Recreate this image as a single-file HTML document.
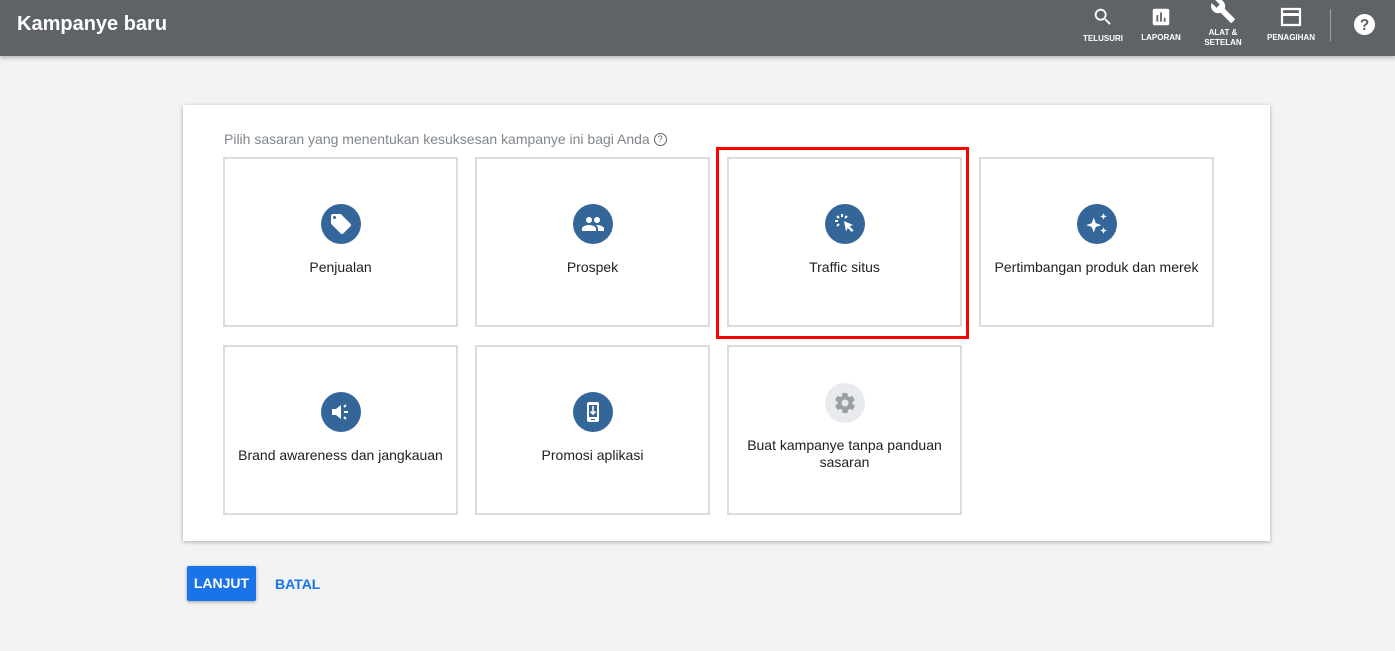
<!DOCTYPE html>
<html><head><meta charset="utf-8"><style>
*{margin:0;padding:0;box-sizing:border-box}
body{width:1395px;height:651px;background:#f1f3f4;font-family:"Liberation Sans",Arial,sans-serif;position:relative;overflow:hidden}
.hdr{position:absolute;left:0;top:0;width:1395px;height:56px;background:#5f6368;box-shadow:0 2px 4px rgba(0,0,0,.25)}
.title{position:absolute;left:17px;top:13px;color:#fff;font-size:20px;font-weight:bold}
.nav{position:absolute;color:#fff;font-size:8px;font-weight:bold;text-align:center;line-height:10px}
.panel{position:absolute;left:183px;top:105px;width:1087px;height:436px;background:#fff;box-shadow:0 1px 4px rgba(0,0,0,.3)}
.q{position:absolute;left:224px;top:131px;font-size:14px;color:#80868b}
.card{position:absolute;width:235px;height:170px;border:2px solid #dadce0;background:#fff}
.ic{position:absolute;left:50%;margin-left:-20px;width:40px;height:40px;border-radius:50%;background:#346699;display:flex;align-items:center;justify-content:center}
.lbl{position:absolute;left:0;right:0;text-align:center;font-size:14px;color:#202124;line-height:17px}
.red{position:absolute;left:716px;top:147px;width:253px;height:192px;border:3px solid #f00}
.btn{position:absolute;left:187px;top:566px;width:69px;height:35px;background:#1a73e8;border-radius:2px;color:#fff;font-weight:bold;font-size:14px;text-align:center;line-height:35px;box-shadow:0 1px 3px rgba(0,0,0,.35)}
.batal{position:absolute;left:275px;top:576px;color:#1a73e8;font-weight:bold;font-size:14px}
</style></head><body>
<div class="hdr">
<div class="title">Kampanye baru</div>
<svg style="position:absolute;left:1092px;top:6px" width="22" height="22" viewBox="0 0 24 24"><path fill="#fff" d="M15.5 14h-.8l-.3-.3A6.5 6.5 0 1 0 9.5 16a6.5 6.5 0 0 0 4.2-1.6l.3.3v.8l5 5 1.5-1.5-5-5zm-6 0a4.5 4.5 0 1 1 0-9 4.5 4.5 0 0 1 0 9z"/></svg>
<div class="nav" style="left:1080px;top:34px;width:46px">TELUSURI</div>
<svg style="position:absolute;left:1150px;top:6px" width="22" height="22" viewBox="0 0 24 24"><path fill="#fff" d="M19 3H5a2 2 0 0 0-2 2v14a2 2 0 0 0 2 2h14a2 2 0 0 0 2-2V5a2 2 0 0 0-2-2zM9 17H7v-7h2v7zm4 0h-2V7h2v10zm4 0h-2v-4h2v4z"/></svg>
<div class="nav" style="left:1138px;top:33px;width:46px">LAPORAN</div>
<svg style="position:absolute;left:1210px;top:-2px" width="26" height="26" viewBox="0 0 24 24"><path fill="#fff" d="M22.7 19l-9.1-9.1c.9-2.3.4-5-1.5-6.9-2-2-5-2.4-7.4-1.3L9 6 6 9 1.6 4.7C.4 7.1.9 10.1 2.9 12.1c1.9 1.9 4.6 2.4 6.9 1.5l9.1 9.1c.4.4 1 .4 1.4 0l2.3-2.3c.5-.4.5-1.1.1-1.4z"/></svg>
<div class="nav" style="left:1200px;top:28px;width:46px">ALAT &amp;<br>SETELAN</div>
<svg style="position:absolute;left:1279px;top:6px" width="24" height="22" viewBox="0 0 24 22"><path fill="none" stroke="#fff" stroke-width="2.2" d="M3 3h18v16H3z"/><path fill="#fff" d="M3 7h18v3H3z"/></svg>
<div class="nav" style="left:1264px;top:33px;width:54px">PENAGIHAN</div>
<div style="position:absolute;left:1330px;top:9px;width:1px;height:32px;background:#9aa0a6"></div>
<svg style="position:absolute;left:1353px;top:13px" width="23" height="23" viewBox="0 0 24 24"><circle cx="12" cy="12" r="11" fill="#fff"/><text x="12" y="17.5" text-anchor="middle" font-family="Liberation Sans" font-weight="bold" font-size="16" fill="#5f6368">?</text></svg>
</div>
<div class="panel"></div>
<div class="q">Pilih sasaran yang menentukan kesuksesan kampanye ini bagi Anda <span style="display:inline-block;width:13px;height:13px;border:1.3px solid #5f6368;border-radius:50%;font-size:9px;text-align:center;line-height:11px;color:#5f6368;vertical-align:2px">?</span></div>

<div class="card" style="left:223px;top:157px"><div class="ic" style="top:45px"><svg width="24" height="24" viewBox="0 0 24 24"><path fill="#fff" d="M21.4 11.6l-9-9C12.1 2.2 11.6 2 11 2H4c-1.1 0-2 .9-2 2v7c0 .6.2 1.1.6 1.4l9 9c.4.4.9.6 1.4.6s1.1-.2 1.4-.6l7-7c.4-.4.6-.9.6-1.4s-.2-1.1-.6-1.4zM5.5 7A1.5 1.5 0 1 1 5.5 4a1.5 1.5 0 0 1 0 3z"/></svg></div><div class="lbl" style="top:100px">Penjualan</div></div>
<div class="card" style="left:475px;top:157px"><div class="ic" style="top:45px"><svg width="24" height="24" viewBox="0 0 24 24"><path fill="#fff" d="M16 11c1.7 0 3-1.3 3-3s-1.3-3-3-3-3 1.3-3 3 1.3 3 3 3zm-8 0c1.7 0 3-1.3 3-3S9.7 5 8 5 5 6.3 5 8s1.3 3 3 3zm0 2c-2.3 0-7 1.2-7 3.5V19h14v-2.5C15 14.2 10.3 13 8 13zm8 0c-.3 0-.6 0-1 .1 1.2.8 2 2 2 3.4V19h6v-2.5c0-2.3-4.7-3.5-7-3.5z"/></svg></div><div class="lbl" style="top:100px">Prospek</div></div>
<div class="card" style="left:727px;top:157px"><div class="ic" style="top:45px"><svg width="24" height="24" viewBox="0 0 24 24"><path fill="#fff" d="M11 9l9 4-3.5 1.3 4 4-1.7 1.7-4-4L13 19.5z"/><path stroke="#fff" stroke-width="2" d="M9 2v3M4 4l2 2M2 9h3M4 14l2-2M14 4l-2 2"/></svg></div><div class="lbl" style="top:100px">Traffic situs</div></div>
<div class="card" style="left:979px;top:157px"><div class="ic" style="top:45px"><svg width="26" height="26" viewBox="0 0 24 24"><path fill="#fff" d="M9 6l1.8 5.2L16 13l-5.2 1.8L9 20l-1.8-5.2L2 13l5.2-1.8zM18 2l.9 2.1L21 5l-2.1.9L18 8l-.9-2.1L15 5l2.1-.9zM18 15l.9 2.1 2.1.9-2.1.9L18 21l-.9-2.1L15 18l2.1-.9z"/></svg></div><div class="lbl" style="top:100px">Pertimbangan produk dan merek</div></div>

<div class="card" style="left:223px;top:345px"><div class="ic" style="top:45px"><svg width="24" height="24" viewBox="0 0 24 24"><path fill="#fff" d="M3 9h4l5-4v14l-5-4H3z"/><path stroke="#fff" stroke-width="2" d="M15 12h4M15 7l2-2M15 17l2 2"/></svg></div><div class="lbl" style="top:100px">Brand awareness dan jangkauan</div></div>
<div class="card" style="left:475px;top:345px"><div class="ic" style="top:45px"><svg width="24" height="24" viewBox="0 0 24 24"><rect x="6" y="2" width="12" height="20" rx="2" fill="#fff"/><rect x="8" y="5" width="8" height="12" fill="#346699"/><path stroke="#fff" stroke-width="1.6" d="M12 6v8M9.5 11.5L12 14l2.5-2.5" fill="none"/><rect x="10" y="19" width="4" height="1" fill="#346699"/></svg></div><div class="lbl" style="top:100px">Promosi aplikasi</div></div>
<div class="card" style="left:727px;top:345px"><div class="ic" style="top:36px;background:#e8eaed"><svg width="24" height="24" viewBox="0 0 24 24"><path fill="#9aa0a6" d="M19.4 13c0-.3.1-.6.1-1s0-.7-.1-1l2.1-1.6c.2-.2.2-.4.1-.6l-2-3.5c-.1-.2-.4-.3-.6-.2l-2.5 1c-.5-.4-1.1-.7-1.7-1l-.4-2.6c0-.3-.2-.5-.5-.5h-4c-.3 0-.5.2-.5.4l-.4 2.7c-.6.2-1.1.6-1.7 1l-2.5-1c-.2-.1-.5 0-.6.2l-2 3.5c-.1.2-.1.5.1.6L4.6 11c0 .3-.1.6-.1 1s0 .7.1 1l-2.1 1.6c-.2.2-.2.4-.1.6l2 3.5c.1.2.4.3.6.2l2.5-1c.5.4 1.1.7 1.7 1l.4 2.6c0 .3.2.5.5.5h4c.3 0 .5-.2.5-.4l.4-2.7c.6-.2 1.1-.6 1.7-1l2.5 1c.2.1.5 0 .6-.2l2-3.5c.1-.2.1-.5-.1-.6zM12 15.5a3.5 3.5 0 1 1 0-7 3.5 3.5 0 0 1 0 7z"/></svg></div><div class="lbl" style="top:90px">Buat kampanye tanpa panduan<br>sasaran</div></div>

<div class="red"></div>
<div class="btn">LANJUT</div>
<div class="batal">BATAL</div>
</body></html>
